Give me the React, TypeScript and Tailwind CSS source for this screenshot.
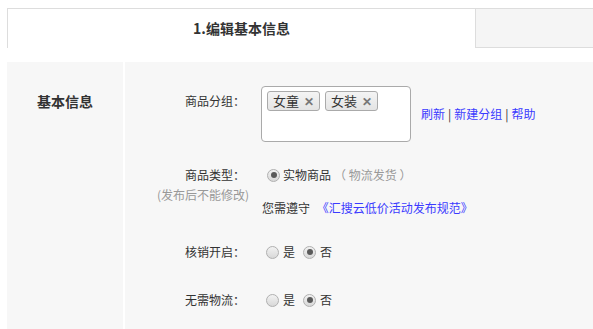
import React from 'react';

const font = { fontFamily: '"Noto Sans CJK SC", "Noto Sans", sans-serif' };

function Radio({ checked }: { checked?: boolean }) {
  return (
    <span className="w-[13px] h-[13px] rounded-full border border-[#b0b0b0] bg-gradient-to-b from-[#f2f2f2] to-[#d8d8d8] flex items-center justify-center flex-shrink-0">
      {checked && <span className="w-[6px] h-[6px] rounded-full bg-[#5a5a5a]" />}
    </span>
  );
}

function Tag({ label }: { label: string }) {
  return (
    <span className="h-[20px] pl-[5px] pr-[5px] flex items-center gap-[5px] rounded-[3px] border border-[#aaa] bg-gradient-to-b from-[#f4f4f4] to-[#e4e4e4] text-[13px] text-[#333]">
      {label}
      <span className="text-[12px] font-bold text-[#777] leading-none">✕</span>
    </span>
  );
}

function Label({ children }: { children: React.ReactNode }) {
  return <div className="w-[122px] text-right pr-[2px] text-[12px] text-[#333] leading-[20px]">{children}</div>;
}

export default function App() {
  return (
    <div className="w-[593px] h-[329px] overflow-hidden bg-white pl-[7px] pt-[8px]" style={font}>
      {/* ── Tabs ── */}
      <div className="flex h-[40px]">
        <div className="w-[468px] border-l border-t border-[#ddd] flex items-center justify-center text-[14px] font-bold text-[#333]">
          1.编辑基本信息
        </div>
        <div className="flex-1 border-l border-t border-b border-[#ddd] bg-[#f5f5f5]" />
      </div>

      {/* ── Panel ── */}
      <div className="mt-[14px] flex h-[300px]">
        <div className="w-[116px] bg-[#f7f7f7] pt-[29px] text-center text-[14px] font-bold text-[#333] leading-[20px]">
          基本信息
        </div>
        <div className="ml-[2px] flex-1 bg-[#f7f7f7] pt-[24px]">
          {/* 商品分组 */}
          <div className="flex">
            <div className="pt-[5px]"><Label>商品分组：</Label></div>
            <div className="ml-[14px] w-[150px] h-[56px] rounded-[4px] border border-[#aaa] bg-white p-[4px] pl-[5px] flex items-start gap-[5px]">
              <Tag label="女童" />
              <Tag label="女装" />
            </div>
            <div className="ml-[10px] self-center text-[12px] leading-[20px] text-[#333]">
              <span className="text-[#3b3bff]">刷新</span>
              <span className="mx-[3px]">|</span>
              <span className="text-[#3b3bff]">新建分组</span>
              <span className="mx-[3px]">|</span>
              <span className="text-[#3b3bff]">帮助</span>
            </div>
          </div>

          {/* 商品类型 */}
          <div className="flex mt-[23px]">
            <div className="flex flex-col">
              <Label>商品类型：</Label>
              <div className="w-[124px] text-right text-[12px] text-[#999] leading-[20px]">(发布后不能修改)</div>
            </div>
            <div className="ml-[13px] flex flex-col text-[12px] leading-[20px]">
              <div className="flex items-center ml-[5px]">
                <Radio checked />
                <span className="ml-[3px] text-[#333]">实物商品</span>
                <span className="ml-[3px] text-[#999] whitespace-pre">（ 物流发货 ）</span>
              </div>
              <div className="mt-[13px] text-[#333]">
                您需遵守 <span className="ml-[4px] text-[#3b3bff]">《汇搜云低价活动发布规范》</span>
              </div>
            </div>
          </div>

          {/* 核销开启 */}
          <div className="flex mt-[24px] text-[12px] leading-[20px]">
            <Label>核销开启：</Label>
            <div className="ml-[19px] flex items-center text-[#333]">
              <Radio />
              <span className="ml-[4px]">是</span>
              <span className="ml-[8px]"><Radio checked /></span>
              <span className="ml-[4px]">否</span>
            </div>
          </div>

          {/* 无需物流 */}
          <div className="flex mt-[28px] text-[12px] leading-[20px]">
            <Label>无需物流：</Label>
            <div className="ml-[19px] flex items-center text-[#333]">
              <Radio />
              <span className="ml-[4px]">是</span>
              <span className="ml-[8px]"><Radio checked /></span>
              <span className="ml-[4px]">否</span>
            </div>
          </div>
        </div>
      </div>
    </div>
  );
}
